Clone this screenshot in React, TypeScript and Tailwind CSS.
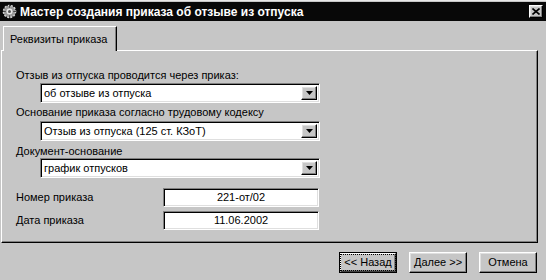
import React from "react";

const raised = "border-t border-l border-t-white border-l-white border-b border-r border-b-black border-r-black shadow-[inset_-1px_-1px_0_#808080,inset_1px_1px_0_#dfdfdf]";

function Combo({ text }: { text: string }) {
  return (
    <div className="ml-[24px] w-[280px] h-[20px] border-t border-l border-t-[#808080] border-l-[#808080] border-b border-r border-b-white border-r-white">
      <div className="w-full h-full bg-white flex items-center shadow-[inset_1px_1px_0_#000,inset_-1px_-1px_0_#dfdfdf]">
        <span className="pl-[3px] text-[11px] leading-[13px] text-black flex-1">{text}</span>
        <div className={`w-[16px] h-[14px] mr-[2px] bg-[#c6c6c6] flex items-center justify-center ${raised}`}>
          <svg width="7" height="4" viewBox="0 0 7 4"><path d="M0 0h7L3.5 4z" fill="#000" /></svg>
        </div>
      </div>
    </div>
  );
}

function Field({ label, value, mt }: { label: string; value: string; mt: string }) {
  return (
    <div className={`flex items-center ${mt}`}>
      <span className="w-[147px] text-[11px] leading-[13px] text-black">{label}</span>
      <div className="w-[156px] h-[19px] border-t border-l border-t-[#808080] border-l-[#808080] border-b border-r border-b-white border-r-white">
        <div className="w-full h-full bg-white flex items-center justify-center shadow-[inset_1px_1px_0_#000,inset_-1px_-1px_0_#dfdfdf]">
          <span className="text-[11px] leading-[13px] text-black">{value}</span>
        </div>
      </div>
    </div>
  );
}

function Btn({ text, focus }: { text: string; focus?: boolean }) {
  return (
    <div className={`w-[58px] h-[21px] bg-[#c6c6c6] flex items-center justify-center ${raised}`}>
      <span className={`text-[11px] leading-[13px] text-black px-[2px] ${focus ? "outline outline-1 outline-dotted outline-black outline-offset-[1px]" : ""}`}>{text}</span>
    </div>
  );
}

export default function App() {
  return (
    <div className="w-[546px] h-[280px] bg-[#c6c6c6] flex flex-col overflow-hidden" style={{ fontFamily: '"Liberation Sans", Arial, sans-serif' }}>
      <div className="h-[1px] bg-[#e8e8e8]" />
      <div className="h-[1px] bg-[#c6c6c6]" />
      <div className="h-[19px] bg-[#080808] flex items-center pl-[2px] pr-[2px]">
        <svg width="15" height="15" viewBox="0 0 16 16" className="mr-[3px]">
          <circle cx="8" cy="8" r="6.5" fill="#9a9a9a" />
          <circle cx="8" cy="8" r="6.5" fill="none" stroke="#d8d8d8" strokeWidth="1.5" strokeDasharray="2 1.5" />
          <circle cx="8" cy="8" r="3.2" fill="#e6e6e6" />
          <circle cx="8" cy="8" r="1.6" fill="#555" />
          <path d="M8 1v3M8 12v3M1 8h3M12 8h3" stroke="#444" strokeWidth="1" />
        </svg>
        <span className="text-white font-bold text-[12px] leading-[14px] flex-1">Мастер создания приказа об отзыве из отпуска</span>
        <div className={`w-[14px] h-[13px] bg-[#c6c6c6] flex items-center justify-center mr-[1px] ${raised}`}>
          <svg width="8" height="7" viewBox="0 0 8 7"><path d="M0.5 0.5L7.5 6.5M7.5 0.5L0.5 6.5" stroke="#000" strokeWidth="1.6" /></svg>
        </div>
      </div>
      <div className="pl-[3px] mt-[5px] flex relative z-10">
        <div className="w-[114px] h-[25px] -mb-[1px] bg-[#c6c6c6] border-t border-l border-t-white border-l-white border-r border-r-black shadow-[inset_-1px_0_0_#808080] flex items-center pl-[6px]">
          <span className="text-[11px] leading-[13px] text-black">Реквизиты приказа</span>
        </div>
      </div>
      <div className="ml-[1px] w-[537px] h-[193px] border-t border-l border-t-white border-l-white border-b border-r border-b-black border-r-black shadow-[inset_-1px_-1px_0_#808080] flex flex-col pl-[14px] pt-[18px]">
        <span className="text-[11px] leading-[13px] text-black">Отзыв из отпуска проводится через приказ:</span>
        <div className="mt-[1px]"><Combo text="об отзыве из отпуска" /></div>
        <span className="mt-[3px] text-[11px] leading-[13px] text-black">Основание приказа согласно трудовому кодексу</span>
        <div className="mt-[2px]"><Combo text="Отзыв из отпуска (125 ст. КЗоТ)" /></div>
        <span className="mt-[4px] text-[11px] leading-[13px] text-black">Документ-основание</span>
        <div className="mt-[0px]"><Combo text="график отпусков" /></div>
        <Field label="Номер приказа" value="221-от/02" mt="mt-[10px]" />
        <Field label="Дата приказа" value="11.06.2002" mt="mt-[4px]" />
      </div>
      <div className="flex justify-end gap-[12px] pr-[9px] mt-[9px]">
        <div className="border border-black">
          <div className="w-[56px] h-[19px] bg-[#c6c6c6] flex items-center justify-center border-t border-l border-t-white border-l-white border-b border-r border-b-[#404040] border-r-[#404040] shadow-[inset_-1px_-1px_0_#808080]">
            <span className="text-[11px] leading-[13px] text-black px-[2px] outline outline-1 outline-dotted outline-black outline-offset-[1px]">&lt;&lt; Назад</span>
          </div>
        </div>
        <Btn text="Далее >>" />
        <Btn text="Отмена" />
      </div>
    </div>
  );
}
